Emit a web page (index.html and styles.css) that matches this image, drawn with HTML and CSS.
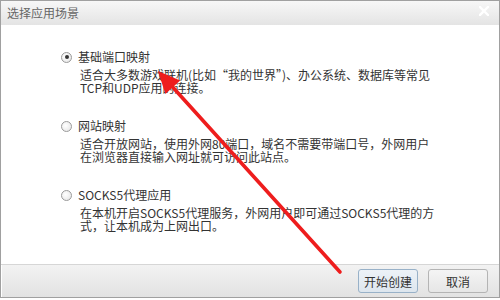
FILE: index.html
```html
<!DOCTYPE html>
<html lang="zh-CN">
<head>
    <meta charset="UTF-8">
    <title>选择应用场景</title>
    <link rel="stylesheet" href="styles.css">
</head>
<body>
    <div class="dialog">
        <div class="title-bar">
            <span class="title">选择应用场景</span>
            <svg class="close" width="10" height="10" viewBox="0 0 10 10">
                <path d="M1 1L9 9M9 1L1 9" stroke="#fff" stroke-width="2.4" stroke-linecap="square"/>
            </svg>
        </div>

        <div class="content">
            <div class="option">
                <label class="option-label"><span class="radio checked"></span>基础端口映射</label>
                <p class="desc">适合大多数游戏联机(比如“我的世界”)、办公系统、数据库等常见<br>TCP和UDP应用的连接。</p>
            </div>
            <div class="option">
                <label class="option-label"><span class="radio"></span>网站映射</label>
                <p class="desc">适合开放网站，使用外网80端口，域名不需要带端口号，外网用户<br>在浏览器直接输入网址就可访问此站点。</p>
            </div>
            <div class="option">
                <label class="option-label"><span class="radio"></span>SOCKS5代理应用</label>
                <p class="desc">在本机开启SOCKS5代理服务，外网用户即可通过SOCKS5代理的方<br>式，让本机成为上网出口。</p>
            </div>
        </div>

        <div class="footer">
            <button class="btn primary">开始创建</button>
            <button class="btn">取消</button>
        </div>

        <!-- annotation arrow drawn over the dialog -->
        <svg class="arrow" width="500" height="300" viewBox="0 0 500 300">
            <line x1="172.8" y1="87.3" x2="340" y2="272" stroke="#ee1d1d" stroke-width="3.6" stroke-linecap="round"/>
            <polygon points="158,71 180.2,80.6 165.4,94" fill="#ee1d1d"/>
        </svg>
    </div>
</body>
</html>
```

FILE: styles.css
```css
body {
    margin: 0;
    background: #fff;
    font-family: "Noto Sans CJK SC", "Noto Sans", sans-serif;
    font-size: 12px;
    color: #333;
}

.dialog {
    position: relative;
    width: 500px;
    height: 298px;
    box-sizing: border-box;
    border: 1px solid #a0a0a0;
    display: flex;
    flex-direction: column;
    overflow: hidden;
}

.title-bar {
    height: 24px;
    flex: none;
    display: flex;
    align-items: center;
    justify-content: space-between;
    padding: 0 10px 0 6px;
    background: linear-gradient(#f7f7f7, #e4e4e4);
}

.title {
    font-size: 12px;
    color: #666;
    line-height: 24px;
}

.close {
    margin-top: -4px;
}

.content {
    flex: 1;
    padding: 24px 0 0 60px;
    background: #fff;
}

.option {
    margin-bottom: 24px;
}

.option-label {
    display: flex;
    align-items: center;
    line-height: 16px;
    height: 16px;
}

.radio {
    width: 9px;
    height: 9px;
    border: 1px solid #9a9a9a;
    border-radius: 50%;
    background: radial-gradient(circle at 40% 40%, #fff, #e2e2e2);
    margin-right: 6px;
    position: relative;
}

.radio.checked::after {
    content: "";
    position: absolute;
    left: 2.5px;
    top: 2.5px;
    width: 4px;
    height: 4px;
    border-radius: 50%;
    background: #333;
}

.desc {
    margin: 3px 0 0 19px;
    line-height: 13px;
    white-space: nowrap;
}

.footer {
    height: 32px;
    flex: none;
    display: flex;
    align-items: center;
    justify-content: flex-end;
    gap: 10px;
    padding-right: 11px;
    border-top: 1px solid #d6d6d6;
    background: linear-gradient(#f2f2f2, #e2e2e2);
    box-shadow: inset 1px 0 0 #fff;
}

.btn {
    width: 60px;
    height: 24px;
    padding: 0;
    font-family: inherit;
    font-size: 12px;
    color: #333;
    border: 1px solid #b4b4b4;
    border-radius: 3px;
    background: linear-gradient(#f4f4f4, #e6e6e6);
}

.btn.primary {
    border-color: #98b1c8;
    background: linear-gradient(#edf2f7, #dde6ee);
}

.arrow {
    position: absolute;
    left: -1px;
    top: -1px;
    pointer-events: none;
}
```
